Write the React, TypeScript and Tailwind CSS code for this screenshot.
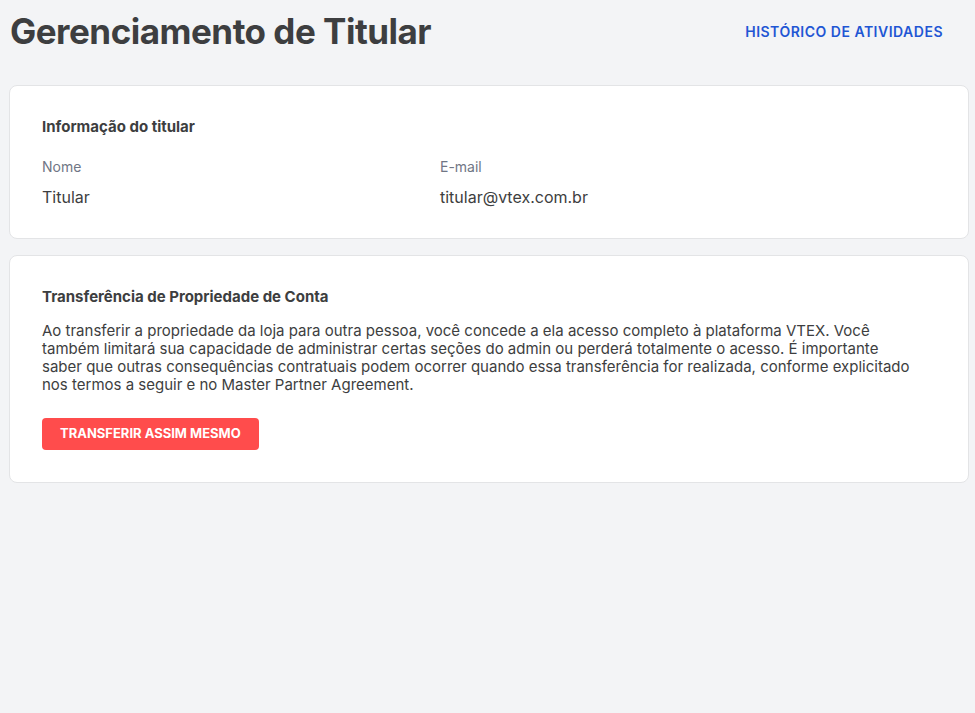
export default function App() {
  return (
    <div className="min-h-[713px] w-full bg-[#f3f4f6] font-['Inter',sans-serif] text-[#3d3e40]">
      <header className="flex items-center justify-between pl-[10px] pr-[32px] pt-[9px] pb-[32px]">
        <h1 className="text-[35px] font-bold leading-[44px] tracking-[-0.5px]">Gerenciamento de Titular</h1>
        <a className="text-[14px] font-semibold uppercase tracking-[0.5px] text-[#1f56d4]">Histórico de atividades</a>
      </header>

      <main className="ml-[9px] flex w-[960px] flex-col gap-4">
        <section className="rounded-lg border border-[#e3e4e6] bg-white p-8">
          <h2 className="text-[15px] font-bold leading-[18px]">Informação do titular</h2>
          <div className="mt-[22px] flex">
            <div className="w-[398px]">
              <div className="text-[14px] leading-[18px] text-[#707685]">Nome</div>
              <div className="mt-3 text-[16px] leading-[18px]">Titular</div>
            </div>
            <div>
              <div className="text-[14px] leading-[18px] text-[#707685]">E-mail</div>
              <div className="mt-3 text-[16px] leading-[18px]">titular@vtex.com.br</div>
            </div>
          </div>
        </section>

        <section className="rounded-lg border border-[#e3e4e6] bg-white p-8">
          <h2 className="text-[15px] font-bold leading-[18px]">Transferência de Propriedade de Conta</h2>
          <p className="mt-4 whitespace-nowrap text-[15px] leading-[18px]">
            <span className="block">Ao transferir a propriedade da loja para outra pessoa, você concede a ela acesso completo à plataforma VTEX. Você</span>
            <span className="block">também limitará sua capacidade de administrar certas seções do admin ou perderá totalmente o acesso. É importante</span>
            <span className="block">saber que outras consequências contratuais podem ocorrer quando essa transferência for realizada, conforme explicitado</span>
            <span className="block">nos termos a seguir e no Master Partner Agreement.</span>
          </p>
          <button className="mt-6 h-8 rounded bg-[#ff4c4c] px-[18px] text-[13px] font-bold uppercase text-white">
            Transferir assim mesmo
          </button>
        </section>
      </main>
    </div>
  );
}
